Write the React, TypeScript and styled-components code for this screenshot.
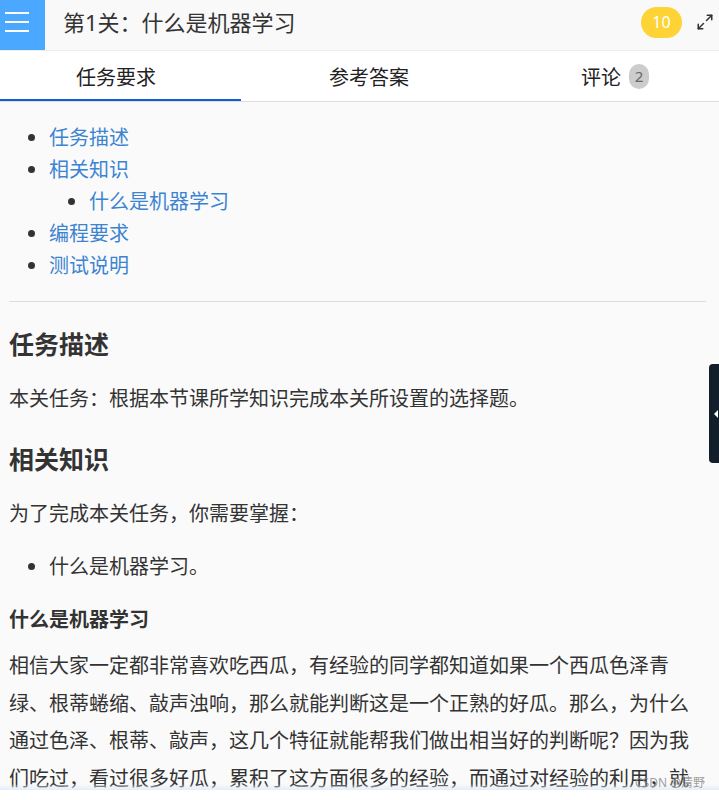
import React from "react";
import styled, { createGlobalStyle } from "styled-components";
import { Maximize2 } from "lucide-react";

const GlobalStyle = createGlobalStyle`
  html, body {
    margin: 0;
    padding: 0;
    background: #ffffff;
  }
  body {
    font-family: "Noto Sans", "Noto Sans CJK SC", sans-serif;
    color: #333;
  }
  * {
    box-sizing: border-box;
  }
`;

const Page = styled.div`
  position: relative;
  height: 790px;
  overflow: hidden;
  background: #fafafa;
`;

const Header = styled.header`
  display: flex;
  align-items: center;
  height: 51px;
  background: #f9f9f9;
  border-bottom: 1px solid #eeeeee;
`;

const MenuButton = styled.div`
  align-self: stretch;
  width: 45px;
  background: #4aa8ff;
  display: flex;
  flex-direction: column;
  justify-content: center;
  gap: 7px;
  padding: 0 0 7px 5px;
`;

const MenuLine = styled.span`
  display: block;
  width: 24px;
  height: 2px;
  background: #ffffff;
`;

const Title = styled.h1`
  flex: 1;
  margin: 0 0 6px 18px;
  font-size: 22px;
  font-weight: 400;
  color: #333;
  line-height: 30px;
`;

const HeaderTools = styled.div`
  display: flex;
  align-items: center;
  gap: 14px;
  margin: 0 5px 6px 0;
  color: #333;
`;

const Score = styled.span`
  display: flex;
  align-items: center;
  justify-content: center;
  width: 41px;
  height: 31px;
  border-radius: 16px;
  background: #fdd335;
  color: #ffffff;
  font-size: 16px;
`;

const Tabs = styled.nav`
  display: grid;
  grid-template-columns: 241px 240px 1fr;
  height: 51px;
  background: #ffffff;
  border-bottom: 1px solid #dddddd;
`;

const Tab = styled.div<{ $active?: boolean; $indent: number }>`
  display: flex;
  align-items: center;
  padding-left: ${({ $indent }) => $indent}px;
  font-size: 20px;
  color: #222;
  box-shadow: ${({ $active }) => ($active ? "inset 0 -2px 0 #115bdc" : "none")};
`;

const CountBadge = styled.span`
  display: inline-flex;
  align-items: center;
  justify-content: center;
  width: 20px;
  height: 25px;
  margin-left: 8px;
  border-radius: 10px;
  background: #cccccc;
  color: #666;
  font-size: 15px;
`;

const Content = styled.main`
  padding: 0 13px 0 9px;
  font-size: 20px;
  color: #333;
`;

const Toc = styled.ul`
  margin: 20px 0 0;
  padding-left: 40px;
  line-height: 32px;
  list-style: disc;

  ul {
    margin: 0;
    padding-left: 40px;
    list-style: disc;
  }
`;

const TocLink = styled.a`
  color: #3c84d2;
  text-decoration: none;
`;

const Divider = styled.hr`
  margin: 19px 0 0;
  border: 0;
  border-top: 1px solid #dddddd;
`;

const H3 = styled.h3`
  margin: 24px 0 16px;
  font-size: 25px;
  font-weight: 700;
  line-height: 37.5px;
  color: #333;
`;

const H4 = styled.h4`
  margin: 14px 0 0;
  font-size: 20px;
  font-weight: 700;
  line-height: 37.5px;
  color: #333;
`;

const Para = styled.p`
  margin: 9px 0 16px;
  line-height: 37.5px;
`;

const Bullets = styled.ul`
  margin: 15px 0;
  padding-left: 40px;
  line-height: 37.5px;
`;

const SideHandle = styled.div`
  position: absolute;
  top: 364px;
  right: 0;
  width: 10px;
  height: 99px;
  border-radius: 4px 0 0 4px;
  background: #121e29;
  display: flex;
  align-items: center;
  padding-left: 5px;
`;

const HandleArrow = styled.span`
  width: 0;
  height: 0;
  border-top: 4px solid transparent;
  border-bottom: 4px solid transparent;
  border-right: 4px solid #ffffff;
`;

const BottomFade = styled.div`
  position: absolute;
  left: 0;
  right: 0;
  bottom: 0;
  height: 6px;
  background: linear-gradient(to bottom, rgba(250, 250, 250, 0), #e4eef9);
`;

const Watermark = styled.span`
  position: absolute;
  right: 14px;
  bottom: 0;
  font-size: 12px;
  line-height: 14px;
  color: rgba(140, 140, 140, 0.85);
`;

const tocItems = [
  { label: "任务描述" },
  { label: "相关知识", children: ["什么是机器学习"] },
  { label: "编程要求" },
  { label: "测试说明" },
];

export default function App() {
  return (
    <Page>
      <GlobalStyle />
      <Header>
        <MenuButton>
          <MenuLine />
          <MenuLine />
          <MenuLine />
        </MenuButton>
        <Title>第1关：什么是机器学习</Title>
        <HeaderTools>
          <Score>10</Score>
          <Maximize2 size={18} strokeWidth={2} />
        </HeaderTools>
      </Header>

      <Tabs>
        <Tab $active $indent={76}>任务要求</Tab>
        <Tab $indent={88}>参考答案</Tab>
        <Tab $indent={100}>
          评论<CountBadge>2</CountBadge>
        </Tab>
      </Tabs>

      <Content>
        <Toc>
          {tocItems.map((item) => (
            <li key={item.label}>
              <TocLink href="#">{item.label}</TocLink>
              {item.children && (
                <ul>
                  {item.children.map((c) => (
                    <li key={c}>
                      <TocLink href="#">{c}</TocLink>
                    </li>
                  ))}
                </ul>
              )}
            </li>
          ))}
        </Toc>
        <Divider />

        <H3>任务描述</H3>
        <Para>本关任务：根据本节课所学知识完成本关所设置的选择题。</Para>

        <H3>相关知识</H3>
        <Para>为了完成本关任务，你需要掌握：</Para>
        <Bullets>
          <li>什么是机器学习。</li>
        </Bullets>

        <H4>什么是机器学习</H4>
        <Para>
          相信大家一定都非常喜欢吃西瓜，有经验的同学都知道如果一个西瓜色泽青绿、根蒂蜷缩、敲声浊响，那么就能判断这是一个正熟的好瓜。那么，为什么通过色泽、根蒂、敲声，这几个特征就能帮我们做出相当好的判断呢？因为我们吃过，看过很多好瓜，累积了这方面很多的经验，而通过对经验的利用，就能对新情况做出有效的决策。
        </Para>
      </Content>

      <SideHandle>
        <HandleArrow />
      </SideHandle>
      <BottomFade />
      <Watermark>CSDN @清野</Watermark>
    </Page>
  );
}
